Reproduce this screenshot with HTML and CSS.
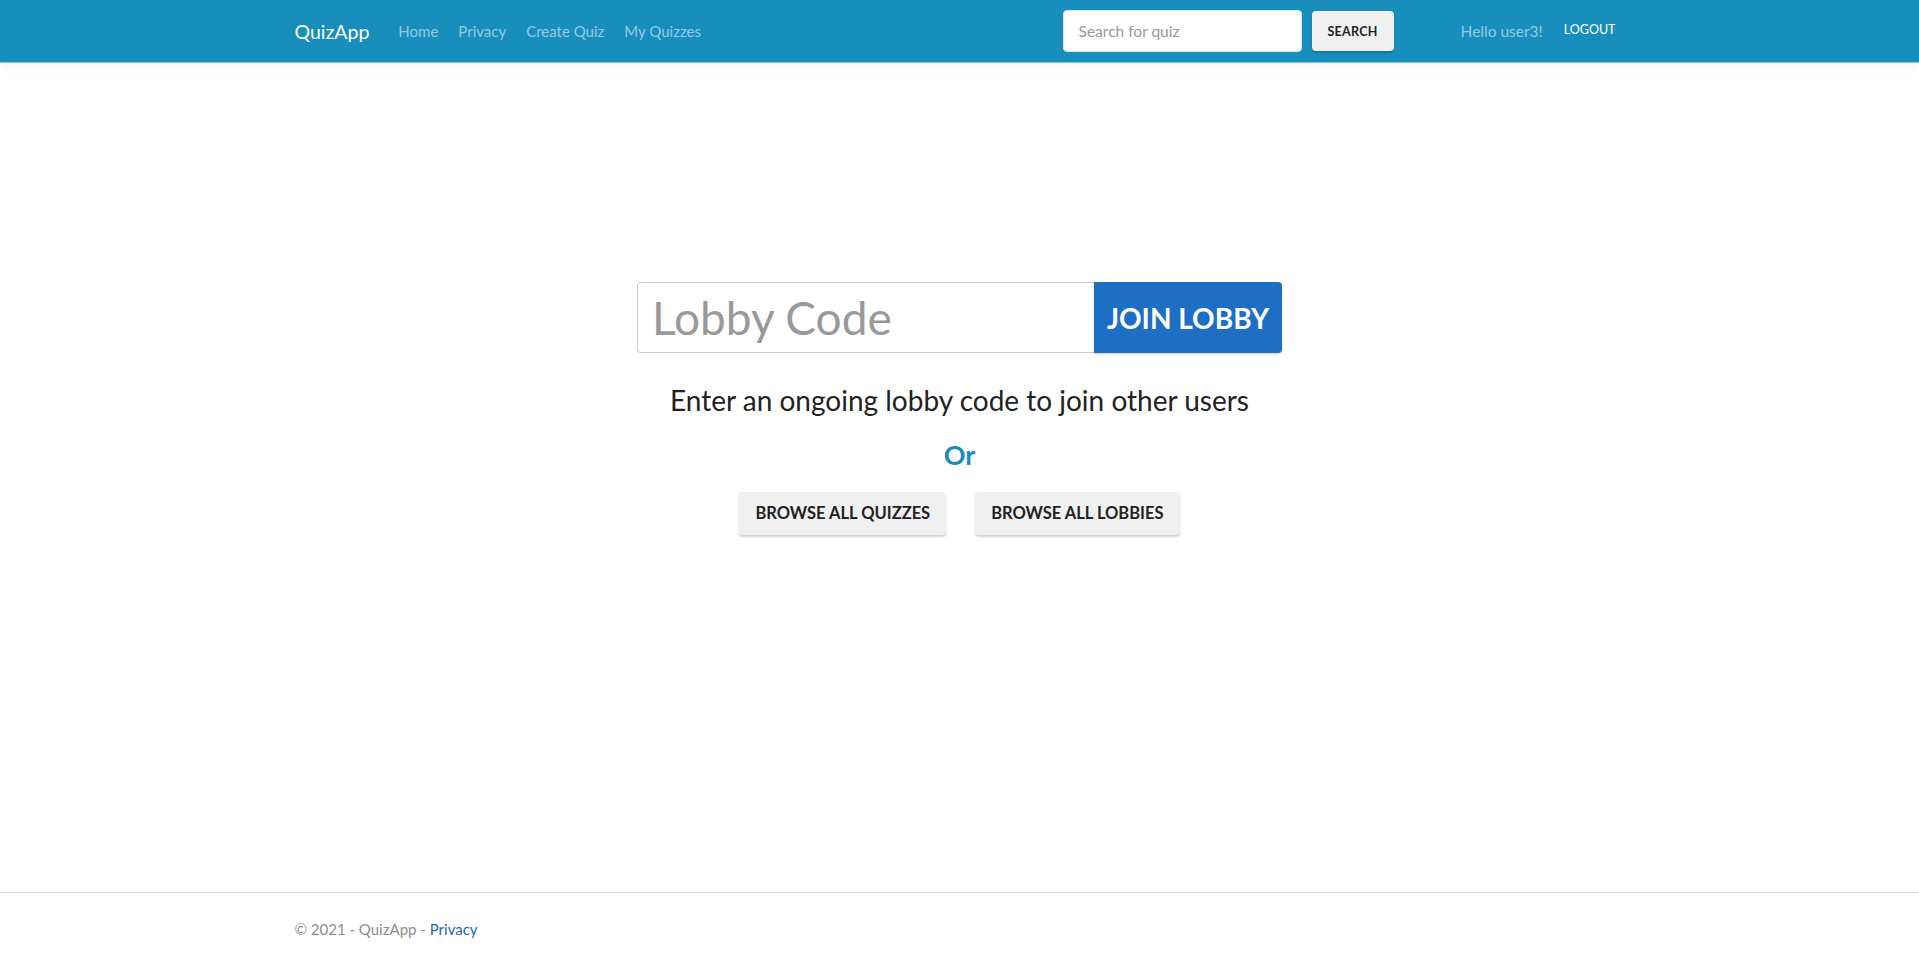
FILE: index.html
```html
<!DOCTYPE html>
<html lang="en">
<head>
<meta charset="utf-8">
<title>QuizApp</title>
<link rel="stylesheet" href="styles.css">
</head>
<body>
<header class="navbar">
  <div class="container nav-inner">
    <a class="brand" href="#">QuizApp</a>
    <nav class="nav-links">
      <a href="#">Home</a>
      <a href="#">Privacy</a>
      <a href="#">Create Quiz</a>
      <a href="#">My Quizzes</a>
    </nav>
    <form class="search">
      <input class="search-input" type="text" placeholder="Search for quiz">
      <button class="btn-light search-btn" type="button">SEARCH</button>
    </form>
    <div class="user">
      <span class="hello">Hello user3!</span>
      <a class="logout" href="#">LOGOUT</a>
    </div>
  </div>
</header>

<main class="main">
  <div class="lobby-form">
    <input class="lobby-input" type="text" placeholder="Lobby Code">
    <button class="lobby-btn" type="button">JOIN LOBBY</button>
  </div>
  <p class="hint">Enter an ongoing lobby code to join other users</p>
  <p class="or">Or</p>
  <div class="browse">
    <button class="btn-light browse-btn" type="button">BROWSE ALL QUIZZES</button>
    <button class="btn-light browse-btn" type="button">BROWSE ALL LOBBIES</button>
  </div>
</main>

<footer class="footer">
  <div class="container">© 2021 - QuizApp - <a href="#">Privacy</a></div>
</footer>
</body>
</html>
```

FILE: styles.css
```css
* { box-sizing: border-box; }

html, body {
  margin: 0;
  padding: 0;
}

body {
  font-family: Lato, "Noto Sans", sans-serif;
  color: #222;
  background: #fff;
  min-height: 100vh;
  display: flex;
  flex-direction: column;
}

a { text-decoration: none; }

.container {
  width: 100%;
  max-width: 1360px;
  margin: 0 auto;
  padding: 0 15px;
}

/* Navbar */
.navbar {
  background: #188ebd;
  height: 62px;
  box-shadow: 0 1px 0 #7cc9e8, 0 3px 12px rgba(0, 0, 0, 0.07);
  position: relative;
  z-index: 1;
}

.nav-inner {
  height: 100%;
  display: flex;
  align-items: center;
}

.brand {
  color: #fff;
  font-size: 19.5px;
  margin-right: 29px;
}

.nav-links {
  display: flex;
  gap: 20px;
  flex: 1;
}

.nav-links a {
  color: #95cbe2;
  font-size: 15px;
}

.search {
  display: flex;
  align-items: center;
  gap: 10px;
  margin-right: 67px;
}

.search-input {
  width: 239px;
  height: 42px;
  border: 1px solid #d6e6ee;
  border-radius: 4px;
  padding: 0 15px;
  font-family: inherit;
  font-size: 15.5px;
  color: #222;
  outline: none;
}

.search-input::placeholder { color: #999; }

.btn-light {
  background: #f0f0f0;
  border: none;
  border-radius: 4px;
  color: #222;
  font-family: inherit;
  font-weight: 700;
  box-shadow: 0 2px 2px rgba(0, 0, 0, 0.18);
  cursor: pointer;
}

.search-btn {
  width: 82px;
  height: 40px;
  font-size: 12.5px;
  letter-spacing: 0.3px;
}

.user {
  display: flex;
  align-items: center;
  gap: 21px;
}

.hello {
  color: #95cbe2;
  font-size: 15.5px;
}

.logout {
  color: #fff;
  font-size: 12.5px;
  padding-right: 9px;
  margin-top: -4px;
}

/* Main */
.main {
  flex: 1;
  display: flex;
  flex-direction: column;
  align-items: center;
  padding-top: 220px;
}

.lobby-form {
  display: flex;
  width: 645px;
  height: 71px;
}

.lobby-input {
  flex: 1;
  min-width: 0;
  border: 1px solid #ccc;
  border-right: none;
  border-radius: 4px 0 0 4px;
  padding: 0 14px;
  font-family: inherit;
  font-size: 46px;
  color: #222;
  outline: none;
}

.lobby-input::placeholder { color: #999; }

.lobby-btn {
  width: 188px;
  border: none;
  border-radius: 0 4px 4px 0;
  background: #1e6ec4;
  color: #fff;
  font-family: inherit;
  font-weight: 700;
  font-size: 28px;
  cursor: pointer;
  box-shadow: 0 1px 2px rgba(0, 0, 0, 0.2);
}

.hint {
  margin: 31px 0 0;
  font-size: 28px;
  line-height: 1.2;
}

.or {
  margin: 21px 0 0;
  font-size: 27px;
  font-weight: 700;
  color: #1a8bbd;
  line-height: 1.2;
}

.browse {
  display: flex;
  gap: 29px;
  margin-top: 21px;
}

.browse-btn {
  height: 43px;
  padding: 0 16px;
  font-size: 16.5px;
}

/* Footer */
.footer {
  border-top: 1px solid #e2e2e2;
  height: 73px;
  line-height: 72px;
  color: #8c8c8c;
  font-size: 15px;
}

.footer a { color: #1c66b8; }
```
